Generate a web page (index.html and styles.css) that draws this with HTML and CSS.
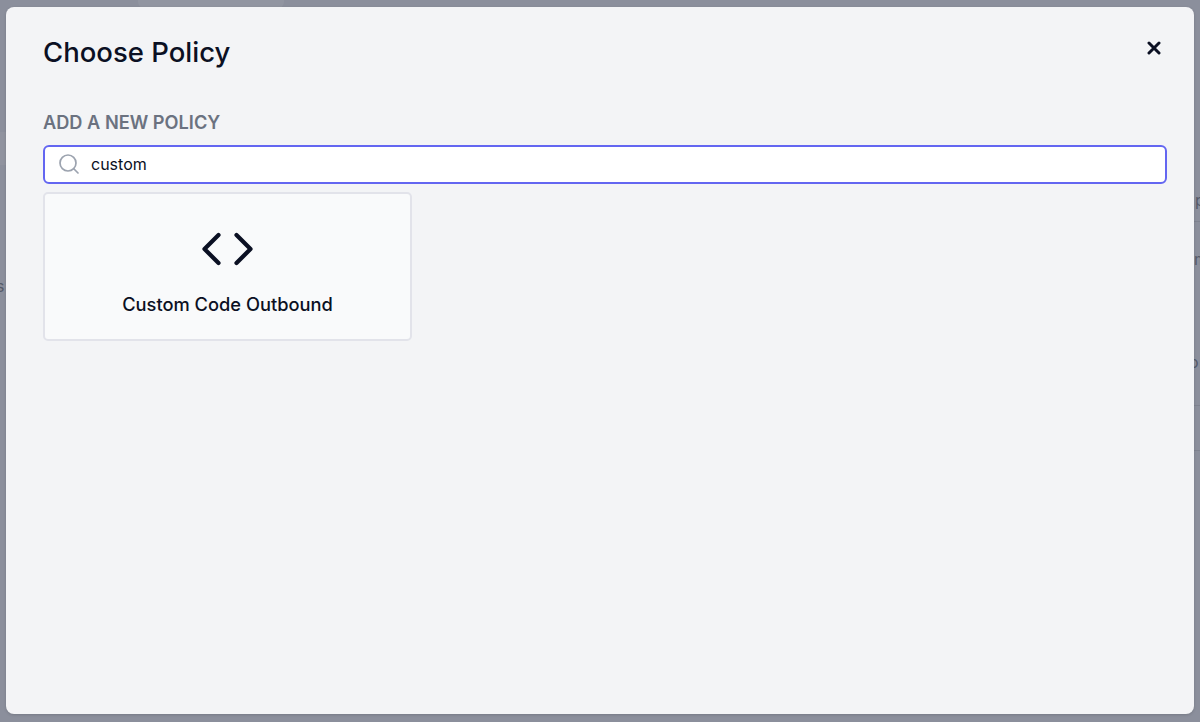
FILE: index.html
```html
<!DOCTYPE html>
<html lang="en">
<head>
    <meta charset="UTF-8">
    <title>Choose Policy</title>
    <link rel="stylesheet" href="styles.css">
</head>
<body>
    <!-- bits of the page behind the overlay that show round the modal -->
    <div class="page-behind">
        <div class="top-tab"></div>
        <div class="left-band"></div>
        <span class="peek peek-s">s</span>
        <span class="peek peek-p">p</span>
        <span class="peek peek-m">m</span>
        <span class="peek peek-o">o</span>
        <div class="rule rule-1"></div>
        <div class="rule rule-2"></div>
        <div class="rule rule-3"></div>
    </div>

    <div class="backdrop">
        <section class="modal">
            <header class="modal-header">
                <h1>Choose Policy</h1>
                <button class="close-button" aria-label="Close">
                    <svg width="14" height="14" viewBox="0 0 14 14">
                        <path d="M2 2L12 12M12 2L2 12" fill="none" stroke="#0b1023" stroke-width="3" stroke-linecap="round"/>
                    </svg>
                </button>
            </header>

            <h2>ADD A NEW POLICY</h2>

            <div class="search-box">
                <svg width="22" height="22" viewBox="0 0 22 22">
                    <circle cx="10" cy="10" r="8" fill="none" stroke="#9ca3af" stroke-width="1.7"/>
                    <path d="M16 16L20 20" fill="none" stroke="#9ca3af" stroke-width="1.7" stroke-linecap="round"/>
                </svg>
                <span class="search-value">custom</span>
            </div>

            <div class="policy-grid">
                <div class="policy-card">
                    <svg width="54" height="36" viewBox="0 0 54 36">
                        <path d="M17.5 4L3.5 18L17.5 32M35.5 4L49.5 18L35.5 32" fill="none" stroke="#0b1023" stroke-width="4.2" stroke-linecap="round" stroke-linejoin="round"/>
                    </svg>
                    <span class="policy-name">Custom Code Outbound</span>
                </div>
            </div>
        </section>
    </div>
</body>
</html>
```

FILE: styles.css
```css
* {
    box-sizing: border-box;
}

html, body {
    height: 100%;
}

body {
    margin: 0;
    font-family: Inter, "Liberation Sans", sans-serif;
    color: #0b1023;
    background: #8b8f9c;
    overflow: hidden;
}

.page-behind {
    position: absolute;
    inset: 0;
    overflow: hidden;
}

.top-tab {
    position: absolute;
    left: 138px;
    top: 0;
    width: 146px;
    height: 8px;
    background: #9195a1;
    border-radius: 0 0 6px 6px;
}

.left-band {
    position: absolute;
    left: 0;
    top: 132px;
    width: 8px;
    height: 33px;
    background: #90939f;
}

.peek {
    position: absolute;
    font-size: 16px;
    line-height: 20px;
    color: #565b69;
}

.peek-s { left: -4px; top: 276px; }
.peek-p { left: 1195px; top: 190px; }
.peek-m { left: 1194px; top: 249px; }
.peek-o { left: 1189px; top: 352px; }

.rule {
    position: absolute;
    left: 1190px;
    width: 10px;
    height: 1px;
    background: #7f8390;
}

.rule-1 { top: 221px; }
.rule-2 { top: 405px; }
.rule-3 { top: 450px; }

.backdrop {
    position: relative;
    display: flex;
    height: 100%;
    padding: 7px 6px 8px;
}

.modal {
    flex: 1;
    padding: 28px 27px 0 37px;
    background: #f3f4f6;
    border-radius: 8px;
    box-shadow: 0 1px 3px rgba(0, 0, 0, 0.15);
}

.modal-header {
    display: flex;
    justify-content: space-between;
    align-items: flex-start;
    padding-right: 6px;
}

h1 {
    margin: 0;
    font-size: 27.5px;
    line-height: 34px;
    font-weight: 500;
}

.close-button {
    display: flex;
    margin: 6px 0 0;
    padding: 0;
    border: none;
    background: none;
}

h2 {
    margin: 41px 0 0;
    font-size: 18.2px;
    line-height: 24px;
    font-weight: 600;
    color: #6b7280;
}

.search-box {
    display: flex;
    align-items: center;
    gap: 11px;
    height: 39px;
    margin-top: 11px;
    padding: 0 0 2px 13px;
    background: #fff;
    border: 2px solid #6366f1;
    border-radius: 6px;
}

.search-value {
    font-size: 16px;
}

.policy-grid {
    display: grid;
    grid-template-columns: 369px;
    margin-top: 8px;
}

.policy-card {
    display: flex;
    flex-direction: column;
    align-items: center;
    height: 149px;
    padding-top: 37px;
    background: #f9fafb;
    border: 2px solid #e2e3ea;
    border-radius: 5px;
}

.policy-name {
    margin-top: 25px;
    font-size: 18.3px;
    line-height: 24px;
    font-weight: 500;
}
```
